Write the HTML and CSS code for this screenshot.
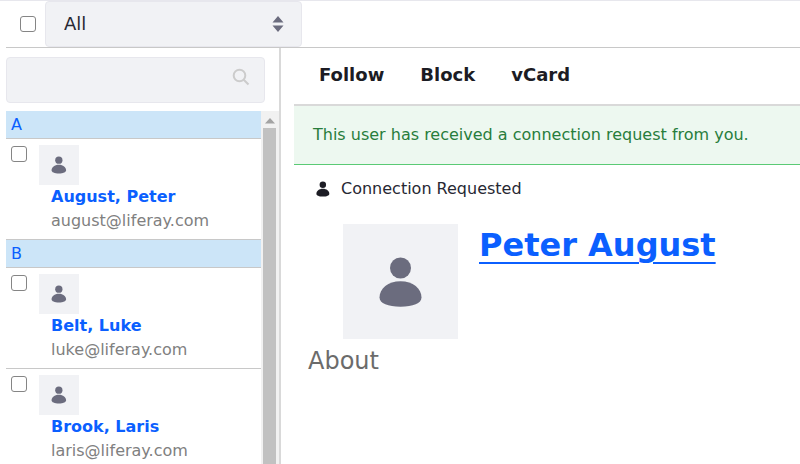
FILE: index.html
```html
<!DOCTYPE html>
<html lang="en">
<head>
<meta charset="utf-8">
<title>Contacts Center</title>
<link rel="stylesheet" href="styles.css">
</head>
<body>
<svg class="sprite" aria-hidden="true">
  <symbol id="user" viewBox="0 0 44 52">
    <circle cx="21.500" cy="12" r="10.5"/>
    <path d="M21.500 25.200C34 25.200 42.500 32.500 42.500 41.500C42.500 47.500 34 50.700 21.500 50.700C9 50.700 0.500 47.500 0.500 41.500C0.500 32.500 9 25.200 21.500 25.200Z"/>
  </symbol>
</svg>
<div class="app">
  <header class="toolbar">
    <input type="checkbox" class="check" aria-label="Select all contacts">
    <div class="filter">
      <select aria-label="Filter contacts"><option>All</option></select>
      <svg class="caret" viewBox="0 0 12 18" aria-hidden="true"><path d="M6 1L11.500 7.500H0.500ZM6 17L0.500 10.500H11.500Z"/></svg>
    </div>
  </header>
  <div class="columns">
    <aside class="sidebar">
      <div class="search">
        <input type="text" aria-label="Search contacts">
        <svg class="lens" viewBox="0 0 18 18" aria-hidden="true"><circle cx="7.500" cy="7.500" r="5.800"/><path d="M11.700 11.700L16.500 16.500"/></svg>
      </div>
      <div class="list">
        <div class="entries">
          <h2>A</h2>
          <div class="entry">
            <input type="checkbox" class="check" aria-label="Select Peter August">
            <div class="person">
              <span class="avatar"><svg><use href="#user"/></svg></span>
              <a href="#august">August, Peter</a>
              <span class="mail">august@liferay.com</span>
            </div>
          </div>
          <h2>B</h2>
          <div class="entry">
            <input type="checkbox" class="check" aria-label="Select Luke Belt">
            <div class="person">
              <span class="avatar"><svg><use href="#user"/></svg></span>
              <a href="#belt">Belt, Luke</a>
              <span class="mail">luke@liferay.com</span>
            </div>
          </div>
          <div class="entry">
            <input type="checkbox" class="check" aria-label="Select Laris Brook">
            <div class="person">
              <span class="avatar"><svg><use href="#user"/></svg></span>
              <a href="#brook">Brook, Laris</a>
              <span class="mail">laris@liferay.com</span>
            </div>
          </div>
        </div>
        <div class="scroll" aria-hidden="true">
          <svg viewBox="0 0 10 6"><path d="M5 0L10 5.500H0Z"/></svg>
          <div class="thumb"></div>
        </div>
      </div>
    </aside>
    <main class="detail">
      <div class="actions">
        <button type="button">Follow</button>
        <button type="button">Block</button>
        <button type="button">vCard</button>
      </div>
      <p class="alert">This user has received a connection request from you.</p>
      <p class="status"><svg><use href="#user"/></svg>Connection Requested</p>
      <section class="profile">
        <span class="portrait"><svg><use href="#user"/></svg></span>
        <h1><a href="#august">Peter August</a></h1>
      </section>
      <h3>About</h3>
    </main>
  </div>
</div>
</body>
</html>
```
FILE: styles.css
```css
* { box-sizing: border-box; }
body {
  margin: 0;
  font: 16px/24px "DejaVu Sans", sans-serif;
  color: #272833;
  background: #fff;
}
h1, h2, h3, p { margin: 0; font-weight: 400; }
svg { display: block; fill: currentColor; }
.sprite { position: absolute; width: 0; height: 0; }
.app {
  display: flex;
  flex-direction: column;
  height: 100vh;
  overflow: hidden;
  border-top: 1px solid #e7e7ed;
  padding-left: 6px;
}
.check {
  appearance: none;
  flex: none;
  width: 16px;
  height: 16px;
  margin: 0;
  border: 1px solid #858585;
  border-radius: 3px;
  background: #fff;
}
.toolbar {
  display: flex;
  align-items: center;
  gap: 9px;
  padding-left: 14px;
  border-bottom: 1px solid #c8c8c8;
}
.filter { display: grid; width: 257px; align-items: center; }
.filter > * { grid-area: 1 / 1; }
.filter select, .search input {
  appearance: none;
  width: 100%;
  height: 46px;
  border: 1px solid #e7e7ed;
  border-radius: 4px;
  background: #f1f2f5;
  padding: 0 18px 2px;
  font: 18px "DejaVu Sans", sans-serif;
  color: #272833;
}
.caret { width: 12px; height: 18px; justify-self: end; margin-right: 18px; color: #6b6c7e; pointer-events: none; }
.columns { display: flex; flex: 1; min-height: 0; }
.sidebar {
  display: flex;
  flex-direction: column;
  flex: none;
  width: 275px;
  border-right: 2px solid #d9d9d9;
}
.search { display: grid; align-items: center; margin: 9px 14px 8px 0; }
.search > * { grid-area: 1 / 1; }
.lens { width: 18px; height: 18px; justify-self: end; margin: 0 15px 6px 0; fill: none; stroke: #ccc; stroke-width: 2; }
.list { display: flex; flex: 1; min-height: 0; }
.entries { flex: 1; overflow: hidden; }
.entries h2 {
  height: 28px;
  padding: 2px 5px 0;
  border-bottom: 1px solid #c8c8c8;
  background: #cce5f8;
  color: #0b5fff;
  font-size: 16px;
}
.entry {
  display: flex;
  gap: 12px;
  height: 101px;
  padding: 6px 5px;
  border-bottom: 1px solid #c8c8c8;
}
.entry .check { margin-top: 1px; }
.person { display: flex; flex-direction: column; }
.avatar, .portrait { display: grid; place-items: center; background: #f1f2f5; color: #6b6c7e; }
.avatar { width: 40px; height: 40px; }
.avatar svg { width: 16px; height: 18px; }
.person a { margin-left: 12px; color: #0b5fff; font-weight: 700; text-decoration: none; }
.mail { margin-left: 12px; color: #808080; }
.scroll {
  display: flex;
  flex-direction: column;
  align-items: center;
  width: 18px;
  padding: 7px 3px 0 2px;
  background: #f1f1f1;
  color: #a3a3a3;
}
.scroll svg { width: 10px; height: 6px; margin-bottom: 4px; }
.thumb { flex: 1; width: 13px; background: #c1c1c1; }
.detail { flex: 1; min-width: 0; padding-left: 13px; }
.actions {
  display: flex;
  gap: 36px;
  padding: 13px 25px 17px;
  border-bottom: 2px solid #d9d9d9;
}
.actions button {
  height: 26px;
  padding: 0;
  border: 0;
  background: none;
  color: #1c1c24;
  font: 700 18px "DejaVu Sans", sans-serif;
}
.alert {
  padding: 17px 19px;
  border-bottom: 1px solid #5aca75;
  background: #edf8f0;
  color: #287d3c;
}
.status { display: flex; align-items: center; gap: 11px; padding: 12px 22px 23px; }
.status svg { width: 14px; height: 16px; color: #1c1c24; }
.profile { display: flex; gap: 21px; margin-left: 49px; }
.portrait { width: 115px; height: 115px; }
.portrait svg { width: 44px; height: 52px; }
.profile h1 { font-size: 32px; line-height: 42px; font-weight: 700; }
.profile a { color: #0b5fff; text-decoration: underline; text-decoration-thickness: 2px; text-underline-offset: 6px; }
h3 { margin-left: 14px; font-size: 24px; line-height: 44px; color: #6b6b6b; }
```
